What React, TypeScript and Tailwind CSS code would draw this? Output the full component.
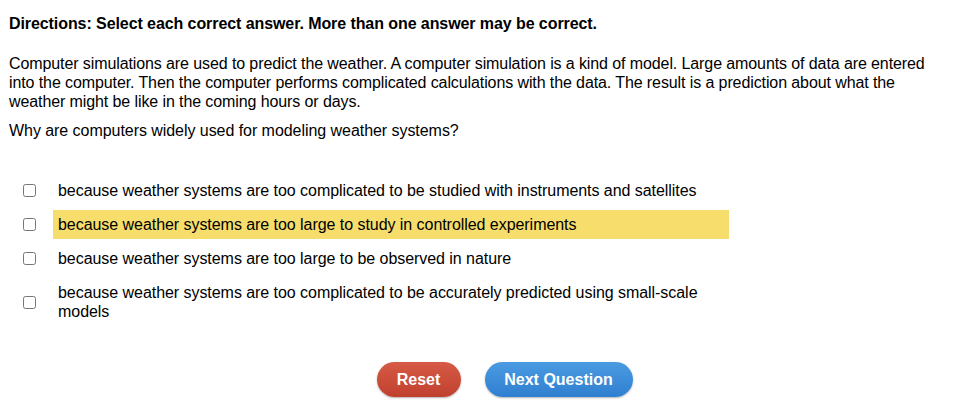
import { useState } from 'react';

const options = [
  'because weather systems are too complicated to be studied with instruments and satellites',
  'because weather systems are too large to study in controlled experiments',
  'because weather systems are too large to be observed in nature',
  'because weather systems are too complicated to be accurately predicted using small-scale models',
];

export default function App() {
  const [checked, setChecked] = useState<boolean[]>([false, false, false, false]);
  const hovered = 1;

  return (
    <main className="min-h-screen bg-white text-black font-['Liberation_Sans',Arial,sans-serif]">
      <div className="px-[9px] pt-[14px]">
        <p className="text-[16px] leading-[19px] font-bold tracking-[-0.08px]">
          Directions: Select each correct answer. More than one answer may be correct.
        </p>
        <p className="mt-[21px] text-[16px] leading-[19px] tracking-[-0.1px]">
          Computer simulations are used to predict the weather. A computer simulation is a kind of model. Large amounts of data are entered into the computer. Then the computer performs complicated calculations with the data. The result is a prediction about what the weather might be like in the coming hours or days.
        </p>
        <p className="mt-[10px] text-[16px] leading-[19px] tracking-[-0.05px]">Why are computers widely used for modeling weather systems?</p>
      </div>

      <ul className="mt-[36px] flex flex-col gap-[5px] pl-[23px]">
        {options.map((o, i) => (
          <li key={i} className="flex items-center gap-[17px]">
            <input
              type="checkbox"
              checked={checked[i]}
              onChange={() => setChecked(c => c.map((v, j) => (j === i ? !v : v)))}
              className="w-[13px] h-[13px] m-0 shrink-0"
            />
            <label
              className={`w-[676px] px-[5px] py-[5px] text-[16px] leading-[19px] tracking-[-0.05px] ${i === hovered ? 'bg-[#f6dd6c]' : ''}`}
            >
              {o}
            </label>
          </li>
        ))}
      </ul>

      <div className="mt-[36px] flex justify-center gap-[24px] pl-[50px]">
        <button className="h-[35px] w-[84px] rounded-full bg-gradient-to-b from-[#d65a45] to-[#c0402f] text-white font-bold text-[16px] shadow-[0_1px_2px_rgba(0,0,0,0.3)]">
          Reset
        </button>
        <button className="h-[35px] w-[148px] rounded-full bg-gradient-to-b from-[#4a9be2] to-[#2f7fd0] text-white font-bold text-[16px] shadow-[0_1px_2px_rgba(0,0,0,0.3)]">
          Next Question
        </button>
      </div>
    </main>
  );
}
